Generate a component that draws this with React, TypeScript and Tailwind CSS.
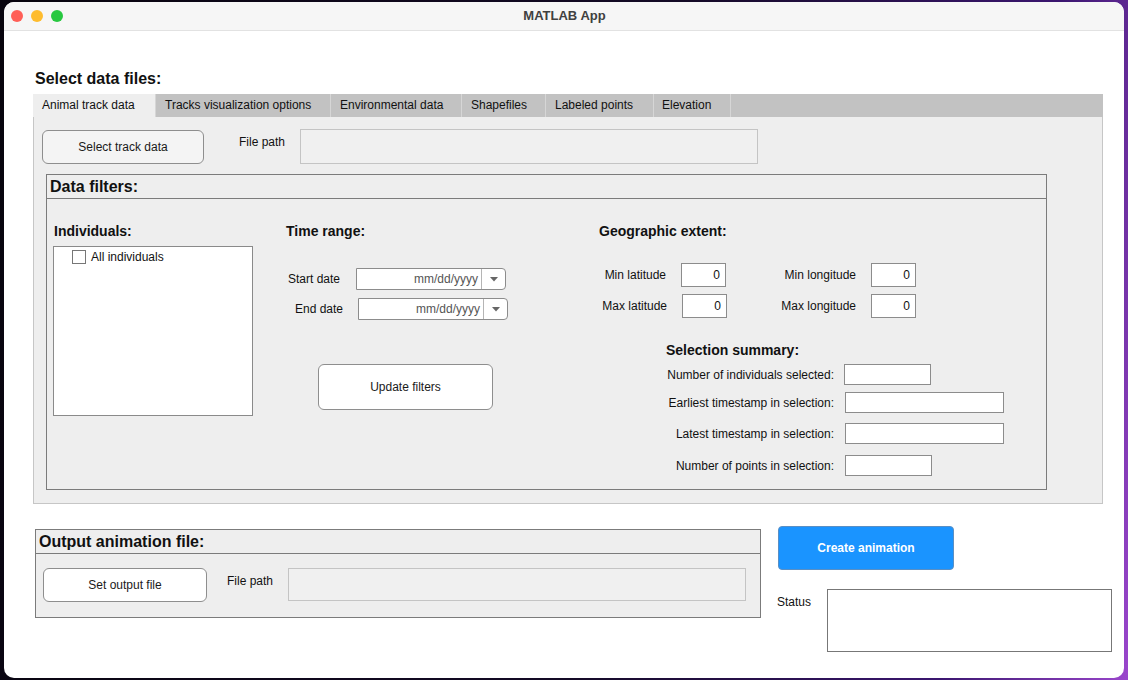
import { ReactNode } from 'react';

const font = { fontFamily: '"Liberation Sans", Arial, sans-serif' };

const tabs = [
  { label: 'Animal track data', w: 'w-[123px] pl-[9px]', active: true },
  { label: 'Tracks visualization options', w: 'w-[175px] pl-[9px]' },
  { label: 'Environmental data', w: 'w-[131px] pl-[9px]' },
  { label: 'Shapefiles', w: 'w-[84px] pl-[9px]' },
  { label: 'Labeled points', w: 'w-[108px] pl-[9px]' },
  { label: 'Elevation', w: 'w-[77px] pl-[8px]' },
];

function Btn({ children, className }: { children: ReactNode; className: string }) {
  return (
    <button className={`flex shrink-0 items-center justify-center rounded-[6px] border border-[#8e8e8e] text-[12px] text-[#1a1a1a] ${className}`}>
      {children}
    </button>
  );
}

function DateField() {
  return (
    <div className="flex h-[22px] w-[150px] shrink-0 items-stretch rounded-r-[4px] border border-[#8c8c8c] bg-white">
      <span className="flex flex-1 items-center justify-end pr-[3px] text-[12px] text-[#555]">mm/dd/yyyy</span>
      <span className="flex w-[24px] items-center justify-center border-l border-[#b5b5b5]">
        <svg width="8" height="5" viewBox="0 0 8 5"><path d="M0 0h8L4 4.5z" fill="#666" /></svg>
      </span>
    </div>
  );
}

function NumBox({ ml }: { ml: string }) {
  return (
    <div className={`${ml} flex h-[24px] w-[45px] shrink-0 items-center justify-end border border-[#8c8c8c] bg-white pr-[5px] text-[12px]`}>0</div>
  );
}

function SummaryRow({ label, mt, field }: { label: string; mt: string; field: string }) {
  return (
    <div className={`${mt} flex items-center`}>
      <span className="w-[170px] shrink-0 text-right">{label}</span>
      <span className={`${field} h-[21px] shrink-0 border border-[#8c8c8c] bg-white`} />
    </div>
  );
}

export default function App() {
  return (
    <div style={font} className="h-[680px] w-[1128px] overflow-hidden bg-[linear-gradient(100deg,#07040d_0%,#140a26_55%,#3b1670_85%,#9a46cc_100%)] pt-[2px] pl-[4px] text-[#111]">
      <div className="flex h-[676px] w-[1120px] flex-col overflow-hidden rounded-[10px] bg-white">
        {/* title bar */}
        <div className="relative flex h-[29px] shrink-0 items-center border-b border-[#e2e2e2] bg-[#f6f6f6] pl-[7px]">
          <div className="flex gap-[8px]">
            <span className="h-[12px] w-[12px] rounded-full bg-[#ff5f57]" />
            <span className="h-[12px] w-[12px] rounded-full bg-[#febc2e]" />
            <span className="h-[12px] w-[12px] rounded-full bg-[#28c840]" />
          </div>
          <span className="flex-1 pr-[58px] text-center text-[13px] font-bold text-[#404040]">MATLAB App</span>
        </div>

        <div className="pl-[29px]">
          <p className="mt-[39px] pl-[2px] text-[16px] font-bold leading-[18px]">Select data files:</p>

          {/* tab group */}
          <div className="mt-[6px] w-[1070px]">
            <div className="flex h-[23px] bg-[#c2c2c2]">
              {tabs.map(t => (
                <div
                  key={t.label}
                  className={`${t.w} flex items-center border-r border-[#d6d6d6] pb-[2px] text-[12px] ${t.active ? 'bg-[#eeeeee]' : ''}`}
                >
                  {t.label}
                </div>
              ))}
            </div>
            <div className="h-[387px] border-x border-b border-[#c6c6c6] bg-[#eeeeee] pt-[12px]">
              <div className="flex items-start">
                <Btn className="ml-[8px] mt-[1px] h-[34px] w-[162px] bg-[#f4f4f4]">Select track data</Btn>
                <span className="ml-[35px] mt-[6px] w-[61px] text-[12px] leading-[14px]">File path</span>
                <div className="h-[35px] w-[458px] border border-[#c4c4c4] bg-[#f0f0f0]" />
              </div>

              {/* Data filters */}
              <div className="ml-[12px] mt-[10px] h-[316px] w-[1001px] border border-[#7b7b7b]">
                <div className="flex h-[24px] items-center border-b border-[#7b7b7b] pl-[3px] text-[16px] font-bold">Data filters:</div>
                <div className="flex pt-[24px]">
                  {/* Individuals */}
                  <div className="ml-[6px] w-[200px] shrink-0">
                    <p className="pl-[1px] text-[14px] font-bold leading-[16px]">Individuals:</p>
                    <div className="mt-[7px] h-[170px] border border-[#8a8a8a] bg-white pl-[18px] pt-[3px]">
                      <div className="flex items-center gap-[5px]">
                        <span className="h-[14px] w-[14px] border border-[#777] bg-white" />
                        <span className="text-[12px] leading-[13px]">All individuals</span>
                      </div>
                    </div>
                  </div>

                  {/* Time range */}
                  <div className="ml-[33px] w-[222px] shrink-0">
                    <p className="text-[14px] font-bold leading-[16px]">Time range:</p>
                    <div className="mt-[29px] flex items-center">
                      <span className="ml-[2px] w-[68px] shrink-0 text-[12px]">Start date</span>
                      <DateField />
                    </div>
                    <div className="mt-[8px] flex items-center">
                      <span className="ml-[9px] w-[63px] shrink-0 text-[12px]">End date</span>
                      <DateField />
                    </div>
                    <Btn className="ml-[32px] mt-[44px] h-[46px] w-[175px] bg-white">Update filters</Btn>
                  </div>

                  {/* Geographic extent */}
                  <div className="ml-[91px] w-[430px] shrink-0">
                    <p className="text-[14px] font-bold leading-[16px]">Geographic extent:</p>
                    <div className="mt-[24px] flex items-center text-[12px]">
                      <span className="w-[67px] shrink-0 text-right">Min latitude</span>
                      <NumBox ml="ml-[15px]" />
                      <span className="w-[130px] shrink-0 text-right">Min longitude</span>
                      <NumBox ml="ml-[15px]" />
                    </div>
                    <div className="mt-[7px] flex items-center text-[12px]">
                      <span className="w-[68px] shrink-0 text-right">Max latitude</span>
                      <NumBox ml="ml-[15px]" />
                      <span className="w-[129px] shrink-0 text-right">Max longitude</span>
                      <NumBox ml="ml-[15px]" />
                    </div>

                    <p className="ml-[67px] mt-[24px] text-[14px] font-bold leading-[16px]">Selection summary:</p>
                    <div className="ml-[65px] text-[12px]">
                      <SummaryRow mt="mt-[6px]" field="ml-[10px] w-[87px]" label="Number of individuals selected:" />
                      <SummaryRow mt="mt-[7px]" field="ml-[11px] w-[159px]" label="Earliest timestamp in selection:" />
                      <SummaryRow mt="mt-[10px]" field="ml-[11px] w-[159px]" label="Latest timestamp in selection:" />
                      <SummaryRow mt="mt-[11px]" field="ml-[11px] w-[87px]" label="Number of points in selection:" />
                    </div>
                  </div>
                </div>
              </div>
            </div>
          </div>

          {/* bottom row */}
          <div className="mt-[22px] flex items-start">
            <div className="ml-[2px] mt-[3px] h-[89px] w-[726px] shrink-0 border border-[#7b7b7b] bg-[#eeeeee]">
              <div className="flex h-[24px] items-center border-b border-[#7b7b7b] pl-[3px] pt-[1px] text-[16px] font-bold">Output animation file:</div>
              <div className="flex items-start">
                <Btn className="ml-[7px] mt-[14px] h-[34px] w-[164px] bg-white">Set output file</Btn>
                <span className="ml-[20px] mt-[20px] w-[61px] text-[12px] leading-[14px]">File path</span>
                <div className="mt-[14px] h-[33px] w-[458px] border border-[#c4c4c4] bg-[#f0f0f0]" />
              </div>
            </div>

            <div className="ml-[16px] flex flex-col">
              <button className="ml-[1px] h-[44px] w-[176px] rounded-[4px] border border-[#5a8fc4] bg-[#1a94ff] text-[12px] font-bold text-white">
                Create animation
              </button>
              <div className="mt-[19px] flex items-start">
                <span className="mt-[4px] w-[50px] text-[12px]">Status</span>
                <div className="h-[63px] w-[285px] border border-[#777] bg-white" />
              </div>
            </div>
          </div>
        </div>
      </div>
    </div>
  );
}
